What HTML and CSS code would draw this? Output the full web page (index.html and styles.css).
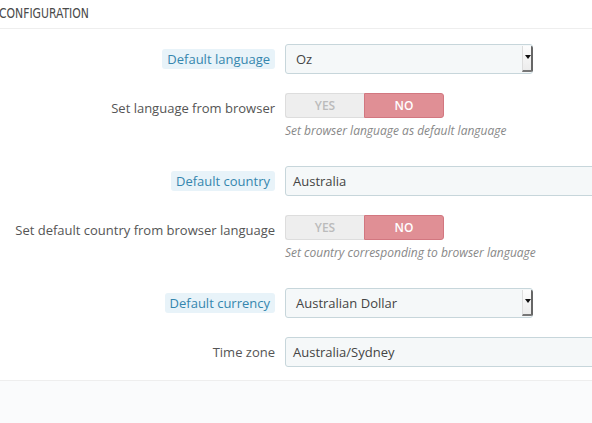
FILE: index.html
```html
<!DOCTYPE html>
<html>
<head>
<meta charset="utf-8">
<link rel="stylesheet" href="styles.css">
</head>
<body>
<div class="panel">
  <div class="panel-heading"><span class="heading-text">Configuration</span></div>
  <div class="form">
    <div class="group">
      <div class="label-col"><span class="label hint">Default language</span></div>
      <div class="control">
        <div class="select"><span class="value">Oz</span><span class="arrow"></span></div>
      </div>
    </div>
    <div class="group">
      <div class="label-col"><span class="label">Set language from browser</span></div>
      <div class="control">
        <div class="switch"><span class="opt yes">YES</span><span class="opt no">NO</span></div>
        <p class="help">Set browser language as default language</p>
      </div>
    </div>
    <div class="group">
      <div class="label-col"><span class="label hint">Default country</span></div>
      <div class="control">
        <div class="input">Australia</div>
      </div>
    </div>
    <div class="group">
      <div class="label-col"><span class="label">Set default country from browser language</span></div>
      <div class="control">
        <div class="switch"><span class="opt yes">YES</span><span class="opt no">NO</span></div>
        <p class="help">Set country corresponding to browser language</p>
      </div>
    </div>
    <div class="group">
      <div class="label-col"><span class="label hint">Default currency</span></div>
      <div class="control">
        <div class="select"><span class="value">Australian Dollar</span><span class="arrow"></span></div>
      </div>
    </div>
    <div class="group last">
      <div class="label-col"><span class="label">Time zone</span></div>
      <div class="control">
        <div class="input">Australia/Sydney</div>
      </div>
    </div>
  </div>
  <div class="panel-footer"></div>
</div>
</body>
</html>
```

FILE: styles.css
```css
html, body {
  margin: 0;
  padding: 0;
  background: #fff;
  overflow: hidden;
}
body {
  width: 592px;
  height: 423px;
  font-family: "Open Sans", "DejaVu Sans", sans-serif;
  font-size: 13px;
  color: #555;
}
.panel {
  width: 592px;
  height: 423px;
  overflow: hidden;
  display: flex;
  flex-direction: column;
}
.panel-heading {
  height: 28px;
  flex: none;
  border-bottom: 1px solid #eee;
  overflow: hidden;
}
.heading-text {
  display: inline-block;
  font-family: "DejaVu Sans Condensed", "DejaVu Sans", sans-serif;
  font-size: 14px;
  line-height: 26px;
  text-transform: uppercase;
  color: #4a4a4a;
  transform: scaleX(0.86);
  transform-origin: left center;
  margin-left: -1px;
}
.form {
  flex: none;
  padding-top: 15px;
  padding-bottom: 13px;
}
.group {
  display: grid;
  grid-template-columns: 275px 1fr;
  column-gap: 10px;
  margin-bottom: 19px;
}
.group.last {
  margin-bottom: 0;
}
.label-col {
  display: flex;
  justify-content: flex-end;
  align-items: flex-start;
}
.label {
  display: inline-block;
  line-height: 20px;
  margin-top: 5px;
  padding: 0 5px;
  color: #555;
}
.group .label-col .label:not(.hint) {
  padding-right: 0;
}
.label.hint {
  background: #e8f3f9;
  color: #3586ae;
  border-radius: 3px;
}
.control {
  display: flex;
  flex-direction: column;
  align-items: flex-start;
  min-width: 0;
}
.select {
  position: relative;
  width: 246px;
  height: 28px;
  border: 1px solid #c7d6db;
  border-radius: 3px;
  background: #f5f8f9;
  display: flex;
  align-items: center;
  color: #444;
}
.select .value {
  padding-left: 10px;
}
.arrow {
  position: absolute;
  right: -1px;
  top: 1px;
  width: 11px;
  height: 26px;
  background: linear-gradient(#fdfdfd, #ececec);
  border-right: 2px solid #666;
  border-bottom: 2px solid #777;
  border-left: 1px solid #ddd;
  box-sizing: border-box;
  border-radius: 0 2px 2px 0;
}
.arrow::after {
  content: "";
  position: absolute;
  left: 2px;
  top: 9px;
  border-left: 3px solid transparent;
  border-right: 3px solid transparent;
  border-top: 4px solid #111;
}
.input {
  width: 400px;
  flex: none;
  height: 28px;
  line-height: 28px;
  border: 1px solid #c7d6db;
  border-radius: 3px;
  background: #f5f8f9;
  padding-left: 7px;
  color: #444;
}
.switch {
  display: flex;
  width: 159px;
  height: 25px;
}
.opt {
  flex: 1;
  display: flex;
  align-items: center;
  justify-content: center;
  font-size: 12px;
  font-weight: 600;
  box-sizing: border-box;
}
.yes {
  background: #eeeeee;
  color: #bbb;
  border: 1px solid #ddd;
  border-right: none;
  border-radius: 3px 0 0 3px;
}
.no {
  background: #e08f95;
  color: #fff;
  border: 1px solid #d27780;
  border-radius: 0 3px 3px 0;
}
.help {
  margin: 5px 0 8px;
  font-size: 12px;
  font-style: italic;
  color: #888;
  line-height: 16px;
}
.panel-footer {
  flex: 1;
  background: #fafbfc;
  border-top: 1px solid #eee;
}
```
